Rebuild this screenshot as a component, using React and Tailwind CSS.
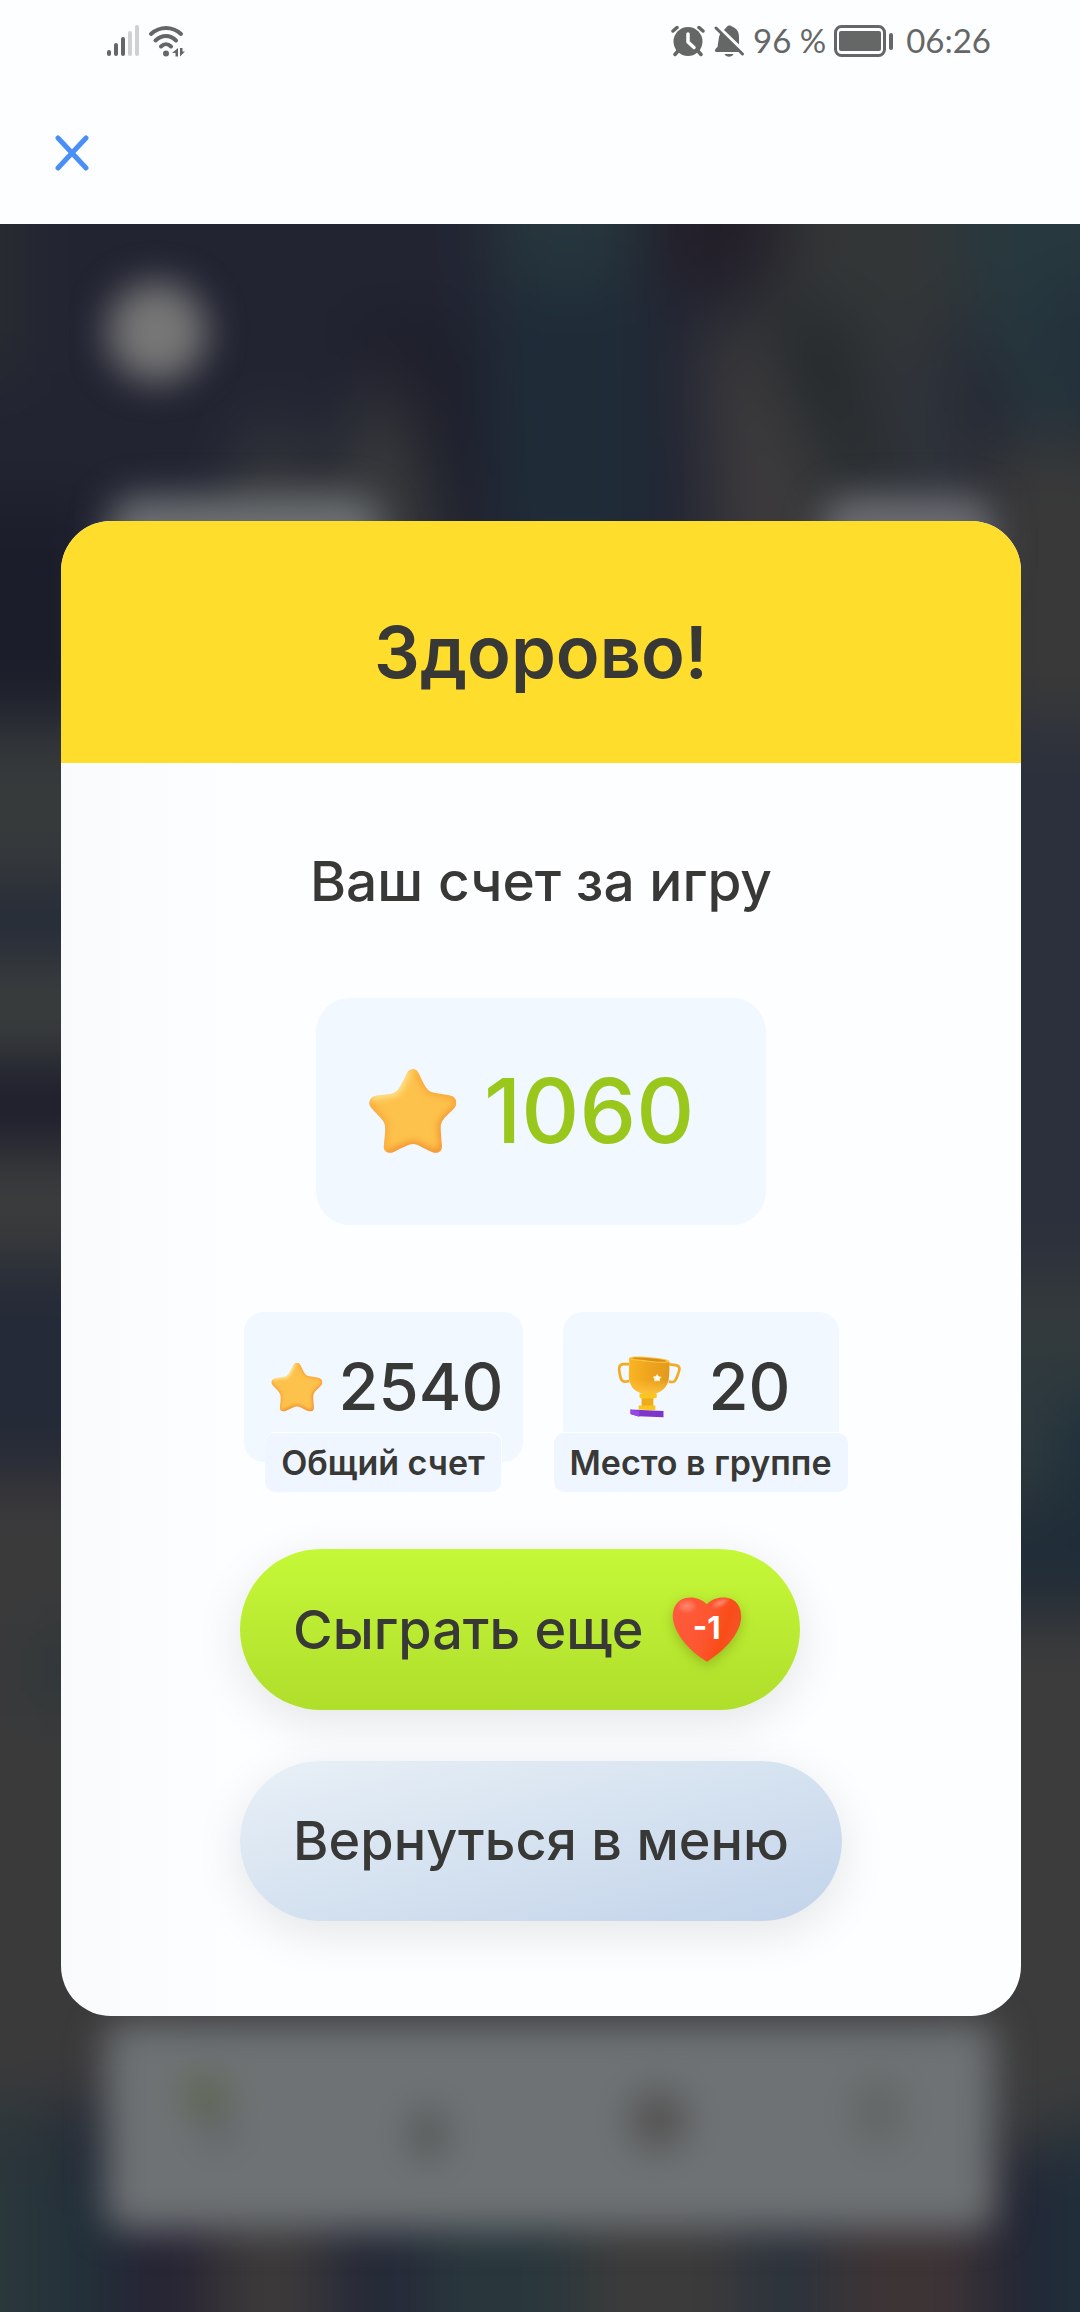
import { useId } from "react";

const SignalIcon = () => (
  <svg className="w-8 h-8" viewBox="0 0 32 32" fill="#656766" aria-hidden="true">
    <rect x="0" y="25" width="4" height="6" rx="2" />
    <rect x="7" y="18" width="4" height="13" rx="2" />
    <rect x="14" y="12" width="4" height="19" rx="2" />
    <rect x="21" y="6" width="4" height="25" rx="2" fill="#cfd0d1" />
    <rect x="28" y="0" width="4" height="31" rx="2" fill="#cfd0d1" />
  </svg>
);

const WifiIcon = () => (
  <svg className="w-[38px] h-8" viewBox="0 0 38 32" fill="none" aria-hidden="true">
    <g stroke="#656766" strokeWidth="4" strokeLinecap="round">
      <path d="M3 9 C12 1 24 1 33 9" />
      <path d="M7.500 15.500 C14 9.500 22 9.500 28 15.500" />
      <path d="M13 21.500 C16 18.500 20 18.500 23 21.500" />
    </g>
    <circle cx="18" cy="28.500" r="3" fill="#656766" />
    <path d="M24 28 L30 23 V31.500 H27.500 V28Z M32 23 V31.500 L37 26.500 H34.500 V23Z" fill="#656766" />
  </svg>
);

const AlarmIcon = () => (
  <svg className="w-[34px] h-8" viewBox="0 0 34 32" fill="none" aria-hidden="true">
    <circle cx="17" cy="16.500" r="14.500" fill="#656766" />
    <path d="M2 6 L6 2.500 M32 6 L28 2.500 M7 26 L4 29.500 M27 26 L30 29.500" stroke="#656766" strokeWidth="3.500" strokeLinecap="round" />
    <path d="M17 9 V17 L23 22.500" stroke="#fff" strokeWidth="3.500" strokeLinecap="round" strokeLinejoin="round" />
  </svg>
);

const BellOffIcon = () => (
  <svg className="w-8 h-8" viewBox="0 0 32 32" fill="none" aria-hidden="true">
    <path d="M7.500 8 L27 27 H3 C1 26 2 24 4.500 22 L6 12Z" fill="#656766" />
    <path d="M11 5 C12.500 3 13.500 2.500 14 1.500 C15 0 18 0 19 1.500 C23 3 26 6 26 12 V19.500Z" fill="#656766" />
    <path d="M11.500 29 H20.500 C19 32.500 13 32.500 11.500 29Z" fill="#656766" />
    <path d="M3 3 L29.500 29" stroke="#656766" strokeWidth="3" strokeLinecap="round" />
  </svg>
);

const BatteryIcon = () => (
  <svg className="w-[60px] h-8" viewBox="0 0 60 32" aria-hidden="true">
    <rect x="1.500" y="1.500" width="49" height="29" rx="6" fill="none" stroke="#656766" strokeWidth="3" />
    <rect x="5" y="6" width="42" height="20" rx="2" fill="#656766" />
    <rect x="55" y="8" width="4" height="17" rx="2" fill="#656766" />
  </svg>
);

const CloseIcon = () => (
  <svg className="w-9 h-9" viewBox="0 0 36 36" fill="none" stroke="#4a8ff5" strokeWidth="5" strokeLinecap="round" aria-hidden="true">
    <path d="M4 3 L32 33 M32 3 L4 33" />
  </svg>
);

const starPath =
  "M400 746 C410 746 415 752 419 762 C428 782 436 800 446 810 C452 816 462 818 474 820 L510 826 C526 829 532 838 532 849 C532 862 524 868 515 876 C500 889 488 902 485 915 C483 928 486 950 488 978 C490 996 478 1003 464 1001 C448 996 425 983 412 977 C404 974 396 974 388 977 C370 984 350 995 336 1001 C320 1003 309 995 311 980 C313 960 317 935 314 915 C310 900 290 884 278 870 C268 860 266 853 267 847 C269 834 278 829 290 827 L330 822 C345 819 354 812 360 800 C368 787 374 774 381 760 C386 750 391 746 400 746Z";

const StarIcon = ({ className }) => {
  const id = useId();
  return (
    <svg className={className} viewBox="266 744 268 260" aria-hidden="true">
      <defs>
        <clipPath id={`${id}-clip`}>
          <path d={starPath} />
        </clipPath>
        <filter id={`${id}-soft`} x="-20%" y="-20%" width="140%" height="140%" colorInterpolationFilters="sRGB">
          <feGaussianBlur stdDeviation="9" />
        </filter>
      </defs>
      <g clipPath={`url(#${id}-clip)`}>
        <path d={starPath} fill="#fdc24b" />
        <g filter={`url(#${id}-soft)`} fill="none" strokeLinecap="round" strokeWidth="20">
          <path d="M381 756 C372 780 362 806 345 819 L282 828" stroke="#ffe596" />
          <path d="M420 762 C430 784 438 802 450 812 L520 826 L536 850 L518 878" stroke="#fba53a" />
          <path d="M520 878 C498 896 484 906 486 930 L492 985 L465 1006" stroke="#f49234" />
          <path d="M262 850 L285 880 C300 892 314 902 314 925 L308 985" stroke="#f9a840" />
          <path d="M320 1006 L388 978 L412 978 L470 1006" stroke="#f39032" />
        </g>
      </g>
    </svg>
  );
};

const TrophyIcon = () => (
  <svg className="w-16 h-16" viewBox="50 46 190 190" aria-hidden="true">
    <defs>
      <linearGradient id="cup" x1="0" x2="1" y1="0" y2="0">
        <stop offset="0" stopColor="#f9b522" />
        <stop offset=".45" stopColor="#f0a51f" />
        <stop offset="1" stopColor="#e39a1c" />
      </linearGradient>
      <linearGradient id="cupBottom" x1="0" x2="0" y1="0" y2="1">
        <stop offset=".6" stopColor="#fdc33a" stopOpacity="0" />
        <stop offset="1" stopColor="#fdc33a" />
      </linearGradient>
    </defs>
    <g fill="none" stroke="#f2ab22" strokeWidth="8">
      <path d="M86 73 L68 73 C53 74 55 90 60 110 C64 126 70 127 86 123" />
      <path d="M205 74 L224 76 C239 78 237 90 230 106 C224 124 220 129 204 125" />
    </g>
    <path d="M90 208 L188 212 V231 L112 228 L90 221Z" fill="#8035c9" />
    <path d="M90 208 L116 213 V229 L90 221Z" fill="#9747e6" />
    <rect x="123" y="170" width="35" height="30" fill="#efaa20" />
    <path d="M117 160 H168 V172 L158 175 H124 L117 172Z" fill="#fac61e" />
    <path d="M114 196 H164 V208 L158 210 L114 208Z" fill="#f9c61e" />
    <path d="M86 55 C88 80 82 108 88 128 C96 150 115 162 143 163 C172 163 197 148 203 122 C207 100 205 84 206 66Z" fill="url(#cup)" />
    <path d="M86 55 C88 80 82 108 88 128 C96 150 115 162 143 163 C172 163 197 148 203 122 C207 100 205 84 206 66Z" fill="url(#cupBottom)" />
    <path d="M86 54 C95 49 125 50 150 53 C180 56 206 59 206 66 C204 71 170 69 145 66 C115 64 88 61 86 54Z" fill="#fbc63c" />
    <path d="M94 55 C110 52 130 54 150 56 C175 58 196 61 197 65 C190 67 160 65 140 62 C115 60 96 58 94 55Z" fill="#d98e1b" />
    <path d="M169 104 L173 110 L181 112 L176 117 L176 123 L169 122 L162 123 L162 117 L158 111 L165 110Z" fill="#fff" stroke="#fff3c4" strokeWidth="2" strokeLinejoin="round" />
  </svg>
);

const HeartIcon = () => (
  <svg className="w-[70px] h-[65px] drop-shadow-[0_4px_6px_rgba(90,110,0,0.35)]" viewBox="38 54 209 195" aria-hidden="true">
    <defs>
      <linearGradient id="heart" x1="0" y1=".3" x2="1" y2=".6">
        <stop offset="0" stopColor="#ff5a3c" />
        <stop offset=".5" stopColor="#fd5630" />
        <stop offset=".75" stopColor="#f94c18" />
        <stop offset="1" stopColor="#f4562c" />
      </linearGradient>
      <radialGradient id="heartShine">
        <stop offset="0" stopColor="#ff8a72" />
        <stop offset="1" stopColor="#ff8a72" stopOpacity="0" />
      </radialGradient>
    </defs>
    <path d="M142 76 C125 58 100 52 78 57 C50 64 38 90 40 118 C44 160 85 215 143 248 C200 212 244 160 245 115 C246 85 232 62 205 57 C182 53 160 58 142 76Z" fill="url(#heart)" />
    <ellipse cx="82" cy="82" rx="32" ry="22" fill="url(#heartShine)" />
    <ellipse cx="182" cy="72" rx="32" ry="14" fill="url(#heartShine)" transform="rotate(-25 182 72)" />
  </svg>
);

// Out-of-focus game screen behind the dialog
const Backdrop = () => (
  <svg className="absolute inset-0 w-full h-full" viewBox="0 0 1080 2088" preserveAspectRatio="none" aria-hidden="true">
    <defs>
      <filter id="far" x="-10%" y="-10%" width="120%" height="120%" colorInterpolationFilters="sRGB">
        <feGaussianBlur stdDeviation="32" />
      </filter>
      <filter id="near" x="-10%" y="-10%" width="120%" height="120%" colorInterpolationFilters="sRGB">
        <feGaussianBlur stdDeviation="18" />
      </filter>
    </defs>
    <rect width="1080" height="2088" fill="#222432" />
    <g filter="url(#far)">
      <rect x="-80" y="-80" width="1240" height="2248" fill="#222432" />
      <rect x="-80" y="-80" width="100" height="230" fill="#2a2d31" />
      <path d="M350 100 H460 L490 620 H400Z" fill="#1c1d29" />
      <path d="M490 -80 H640 V60 L600 140 H500Z" fill="#26363d" />
      <path d="M490 60 H650 V330 H500Z" fill="#1f2c38" />
      <path d="M500 330 H700 V620 H500Z" fill="#232933" />
      <path d="M650 -80 H790 V60 H650Z" fill="#231f29" />
      <path d="M790 -80 H960 V600 H730 L710 100 L780 60Z" fill="#333637" />
      <path d="M700 110 L760 130 L900 500 L890 620 H730Z" fill="#3c3a3c" />
      <path d="M770 110 L840 80 L910 400 L870 300Z" fill="#23282c" />
      <path d="M890 120 H960 V520 H890Z" fill="#2f343b" />
      <path d="M960 -80 H1180 V100 L1040 250 L960 60Z" fill="#27383e" />
      <path d="M1050 60 H1180 V180 H1050Z" fill="#22303a" />
      <path d="M980 220 H1180 V500 H980Z" fill="#393939" />
      <path d="M200 360 L272 180 L320 300 L388 130 L435 300 L445 620 H200Z" fill="#3b3d3e" />
      <rect x="-80" y="280" width="180" height="210" fill="#1b1d2a" />
      <rect x="-80" y="500" width="260" height="170" fill="#373a3b" />
      <rect x="-80" y="665" width="260" height="64" fill="#222938" />
      <rect x="-80" y="729" width="260" height="113" fill="#3a3d3d" />
      <rect x="-80" y="842" width="260" height="76" fill="#191a2a" />
      <rect x="-80" y="918" width="260" height="118" fill="#3b3c3c" />
      <rect x="-80" y="1036" width="260" height="200" fill="#242a37" />
      <rect x="-80" y="1250" width="260" height="630" fill="#3b3a3b" />
      <rect x="20" y="1400" width="100" height="90" fill="#30383a" />
      <rect x="180" y="1740" width="780" height="100" fill="#3b3a3b" />
      <rect x="960" y="500" width="220" height="560" fill="#2b303c" />
      <rect x="960" y="1050" width="220" height="60" fill="#363a3c" />
      <rect x="960" y="1110" width="220" height="170" fill="#2f3a3e" />
      <rect x="1060" y="1180" width="120" height="180" fill="#1c2e3a" />
      <rect x="960" y="1290" width="220" height="90" fill="#202d38" />
      <rect x="960" y="1390" width="220" height="540" fill="#3c3c3c" />
      <rect x="-80" y="1880" width="130" height="290" fill="#2b373b" />
      <rect x="50" y="1880" width="70" height="90" fill="#252c38" />
      <rect x="50" y="1960" width="80" height="220" fill="#21303a" />
      <rect x="120" y="1960" width="95" height="220" fill="#272434" />
      <rect x="215" y="1960" width="110" height="220" fill="#3d3a3a" />
      <rect x="325" y="1960" width="100" height="220" fill="#252938" />
      <rect x="425" y="1960" width="155" height="220" fill="#29373c" />
      <rect x="580" y="1960" width="160" height="220" fill="#3c3b3b" />
      <rect x="740" y="1960" width="90" height="220" fill="#2c333d" />
      <rect x="830" y="1960" width="160" height="220" fill="#3d3436" />
      <rect x="1000" y="1960" width="50" height="220" fill="#202436" />
      <rect x="1050" y="1900" width="130" height="280" fill="#21303b" />
    </g>
    <g filter="url(#near)">
      <circle cx="157" cy="108" r="50" fill="#777777" />
      <rect x="108" y="272" width="272" height="100" rx="30" fill="#6d7173" />
      <rect x="822" y="272" width="172" height="100" rx="30" fill="#6c6d73" />
      <rect x="105" y="1798" width="890" height="208" rx="20" fill="#6e7274" />
      <circle cx="206" cy="1872" r="20" fill="#5a6348" />
      <circle cx="218" cy="1906" r="16" fill="#5d6168" />
      <ellipse cx="428" cy="1910" rx="18" ry="26" fill="#535656" />
      <ellipse cx="658" cy="1896" rx="29" ry="30" fill="#535252" />
      <ellipse cx="878" cy="1888" rx="26" ry="36" fill="#626665" />
    </g>
  </svg>
);

const StatCard = ({ icon, value, label, className }) => (
  <div className={`relative flex h-[150px] items-center rounded-[20px] bg-[#f2f8ff] ${className}`}>
    {icon}
    <span className="text-[65px] leading-none font-medium">{value}</span>
    <span className="absolute top-[121px] left-1/2 -translate-x-1/2 rounded-[10px] bg-[#eff6ff] px-4 text-[34px] leading-[59px] font-semibold whitespace-nowrap shadow-[0_-1px_1px_#ffffff]">
      {label}
    </span>
  </div>
);

const App = () => {
  return (
    <div className="min-h-screen flex flex-col bg-[#fdfeff] font-['Inter','Liberation_Sans',sans-serif] text-[#383836]">
      <header>
        <div className="flex h-[82px] items-center justify-between pl-[107px] pr-[89px] font-[Lato,sans-serif] text-[33px] text-[#656766]">
          <div className="flex items-center gap-[9px]">
            <SignalIcon />
            <WifiIcon />
          </div>
          <div className="flex items-center gap-2">
            <AlarmIcon />
            <BellOffIcon />
            <span>96 %</span>
            <BatteryIcon />
            <time className="pl-1">06:26</time>
          </div>
        </div>
        <div className="flex h-[142px] items-center px-[54px]">
          <button type="button" aria-label="Закрыть">
            <CloseIcon />
          </button>
        </div>
      </header>

      <main className="relative flex flex-1 items-center overflow-hidden pl-[61px] pr-[59px]">
        <Backdrop />
        <section className="relative w-full overflow-hidden rounded-[50px] bg-linear-to-r from-[#f8fafc] to-[#fdfeff] to-20%">
          <div className="flex h-[242px] items-center justify-center bg-[#ffdd2d] pt-5">
            <h1 className="text-[72px] leading-none font-semibold">Здорово!</h1>
          </div>

          <div className="flex flex-col items-center pt-[82px] pb-[95px]">
            <h2 className="text-[55px] leading-[72px] font-medium">Ваш счет за игру</h2>

            <div className="mt-[81px] flex h-[227px] w-[450px] items-center gap-[27px] rounded-[34px] bg-[#f2f8ff] pl-[53px]">
              <StarIcon className="w-[88px] h-[86px]" />
              <span className="text-[90px] leading-none font-medium text-[#99c71c]">1060</span>
            </div>

            <div className="mt-[87px] flex gap-10">
              <StatCard
                className="w-[279px] gap-4 pl-[27px]"
                icon={<StarIcon className="w-[52px] h-[50px]" />}
                value="2540"
                label="Общий счет"
              />
              <StatCard className="w-[276px] gap-7 pl-[54px]" icon={<TrophyIcon />} value="20" label="Место в группе" />
            </div>

            <div className="mt-[87px] flex flex-col items-start gap-[51px]">
              <button
                type="button"
                className="flex h-[161px] items-center gap-7 rounded-full bg-linear-to-b from-[#c5f838] to-[#b0de2c] pl-[53px] pr-[58px] text-[54px] font-medium shadow-[0_12px_48px_rgba(0,0,0,0.1)]"
              >
                Сыграть еще
                <span className="relative flex items-center justify-center">
                  <HeartIcon />
                  <span className="absolute pb-1 text-[31px] leading-none font-bold text-white">-1</span>
                </span>
              </button>
              <button
                type="button"
                className="h-40 rounded-full bg-linear-to-br from-[#e9f0f7] via-[#d5e2f0] to-[#c2d3ea] px-[53px] text-[54px] font-medium shadow-[0_12px_48px_rgba(0,0,0,0.1)]"
              >
                Вернуться в меню
              </button>
            </div>
          </div>
        </section>
      </main>
    </div>
  );
};

export default App;
